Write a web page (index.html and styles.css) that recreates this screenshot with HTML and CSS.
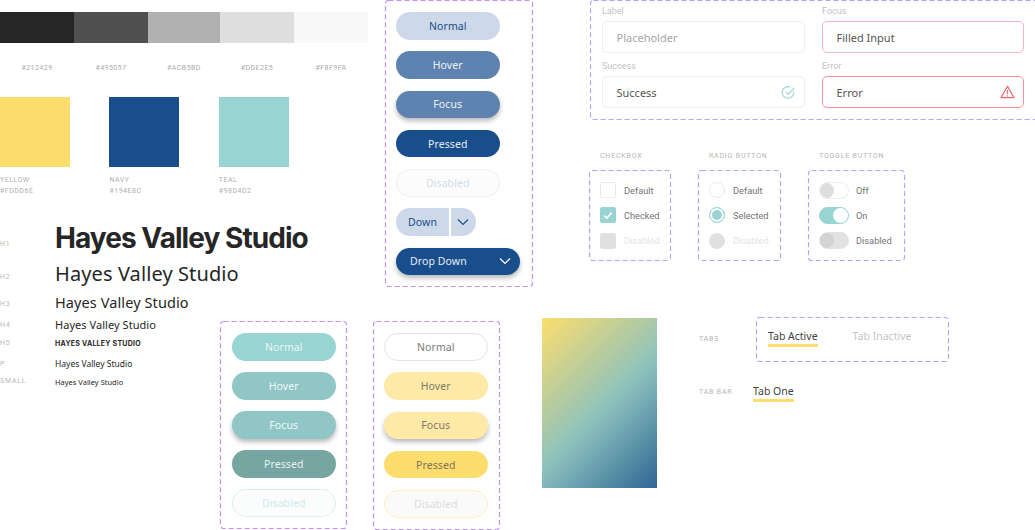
FILE: index.html
```html
<!DOCTYPE html>
<html>
<head>
	<meta charset="utf-8">
	<title>Hayes Valley Studio</title>
	<link rel="stylesheet" href="styles.css">
</head>
<body>
<div class="sheet">

	<!-- colours -->
	<div class="grays">
		<div class="gray"><div class="chip c1"></div><span>#212429</span></div>
		<div class="gray"><div class="chip c2"></div><span>#495057</span></div>
		<div class="gray g3"><div class="chip c3"></div><span>#ACB5BD</span></div>
		<div class="gray"><div class="chip c4"></div><span>#DDE2E5</span></div>
		<div class="gray"><div class="chip c5"></div><span>#F8F9FA</span></div>
	</div>
	<div class="swatches">
		<div class="swatch"><div class="square yellow"></div><p>YELLOW</p><p>#FDDD6E</p></div>
		<div class="swatch"><div class="square navy"></div><p>NAVY</p><p>#194E8C</p></div>
		<div class="swatch"><div class="square teal"></div><p>TEAL</p><p>#98D4D2</p></div>
	</div>

	<!-- type -->
	<div class="type">
		<div class="row r1"><span class="tag">H1</span><span class="h1">Hayes Valley Studio</span></div>
		<div class="row r2"><span class="tag">H2</span><span class="h2">Hayes Valley Studio</span></div>
		<div class="row r3"><span class="tag">H3</span><span class="h3">Hayes Valley Studio</span></div>
		<div class="row r4"><span class="tag">H4</span><span class="h4">Hayes Valley Studio</span></div>
		<div class="row r5"><span class="tag">H5</span><span class="h5">HAYES VALLEY STUDIO</span></div>
		<div class="row r6"><span class="tag">P</span><span class="para">Hayes Valley Studio</span></div>
		<div class="row r7"><span class="tag">SMALL</span><span class="small">Hayes Valley Studio</span></div>
	</div>

	<!-- navy buttons -->
	<div class="box box-navy">
		<svg class="dash"><rect></rect></svg>
		<div class="btn n-normal">Normal</div>
		<div class="btn n-hover">Hover</div>
		<div class="btn n-hover shadow">Focus</div>
		<div class="btn n-pressed">Pressed</div>
		<div class="btn n-disabled">Disabled</div>
		<div class="split">
			<div class="btn n-normal split-main">Down</div>
			<div class="btn n-normal split-arrow">
				<svg width="12" height="8" viewBox="0 0 12 8"><path d="M1 1.5 6 6.5 11 1.5" fill="none" stroke="#194e8c" stroke-width="1.2"/></svg>
			</div>
		</div>
		<div class="btn n-pressed shadow drop">
			<span>Drop Down</span>
			<svg width="12" height="8" viewBox="0 0 12 8"><path d="M1 1.5 6 6.5 11 1.5" fill="none" stroke="#fff" stroke-width="1.2"/></svg>
		</div>
	</div>

	<!-- teal buttons -->
	<div class="box box-teal">
		<svg class="dash"><rect></rect></svg>
		<div class="btn t-normal">Normal</div>
		<div class="btn t-hover">Hover</div>
		<div class="btn t-hover shadow">Focus</div>
		<div class="btn t-pressed">Pressed</div>
		<div class="btn t-disabled">Disabled</div>
	</div>

	<!-- yellow buttons -->
	<div class="box box-yellow">
		<svg class="dash"><rect></rect></svg>
		<div class="btn y-normal">Normal</div>
		<div class="btn y-hover">Hover</div>
		<div class="btn y-hover shadow">Focus</div>
		<div class="btn y-pressed">Pressed</div>
		<div class="btn y-disabled">Disabled</div>
	</div>

	<!-- inputs -->
	<div class="box box-inputs">
		<svg class="dash blue"><rect></rect></svg>
		<div class="field">
			<label>Label</label>
			<div class="input placeholder">Placeholder</div>
		</div>
		<div class="field">
			<label>Focus</label>
			<div class="input focus">Filled Input</div>
		</div>
		<div class="field">
			<label>Success</label>
			<div class="input">Success
				<svg width="15" height="15" viewBox="0 0 15 15"><path d="M12.6 6.2A5.8 5.8 0 1 1 9.4 2.2" fill="none" stroke="#98d4d2" stroke-width="1.1"/><path d="M4.8 6.8 7.3 9.2 13.4 2.6" fill="none" stroke="#98d4d2" stroke-width="1.1"/></svg>
			</div>
		</div>
		<div class="field">
			<label>Error</label>
			<div class="input error">Error
				<svg width="15" height="14" viewBox="0 0 15 14"><path d="M7.5 1.2 14 12.6H1Z" fill="none" stroke="#f0686e" stroke-width="1.2" stroke-linejoin="round"/><path d="M7.5 5V9M7.5 10.2V11.4" stroke="#f0686e" stroke-width="1.2"/></svg>
			</div>
		</div>
	</div>

	<!-- checkbox -->
	<div class="control c-check">
		<div class="cap">CHECKBOX</div>
		<div class="box">
			<svg class="dash blue"><rect></rect></svg>
			<div class="item"><i class="check"></i>Default</div>
			<div class="item"><i class="check on"><svg width="10" height="9" viewBox="0 0 10 9"><path d="M1.2 4.6 3.8 7 8.6 1.6" fill="none" stroke="#fff" stroke-width="1.7"/></svg></i>Checked</div>
			<div class="item off"><i class="check dis"></i>Disabled</div>
		</div>
	</div>

	<!-- radio -->
	<div class="control c-radio">
		<div class="cap">RADIO BUTTON</div>
		<div class="box">
			<svg class="dash blue"><rect></rect></svg>
			<div class="item"><i class="radio"></i>Default</div>
			<div class="item"><i class="radio on"></i>Selected</div>
			<div class="item off"><i class="radio dis"></i>Disabled</div>
		</div>
	</div>

	<!-- toggle -->
	<div class="control c-toggle">
		<div class="cap">TOGGLE BUTTON</div>
		<div class="box">
			<svg class="dash blue"><rect></rect></svg>
			<div class="item"><i class="toggle"></i>Off</div>
			<div class="item"><i class="toggle on"></i>On</div>
			<div class="item"><i class="toggle dis"></i>Disabled</div>
		</div>
	</div>

	<div class="gradient"></div>

	<!-- tabs -->
	<div class="cap tabs-cap">TABS</div>
	<div class="box box-tabs">
		<svg class="dash blue"><rect></rect></svg>
		<span class="tab active">Tab Active</span>
		<span class="tab">Tab Inactive</span>
	</div>
	<div class="cap bar-cap">TAB BAR</div>
	<div class="tabbar"><span class="tab active">Tab One</span></div>

</div>
</body>
</html>
```

FILE: styles.css
```css
html, body {
	margin: 0;
	padding: 0;
	background: #fff;
}
.sheet {
	position: relative;
	width: 1035px;
	height: 530px;
	overflow: hidden;
	font-family: "Noto Sans", sans-serif;
}

/* gray strip */
.grays {
	position: absolute;
	left: 0;
	top: 12px;
	width: 368px;
	display: flex;
}
.gray {
	width: 74px;
	text-align: center;
	font: 7px "Roboto", sans-serif;
	letter-spacing: .45px;
	color: #ababab;
}
.gray.g3 { width: 72px; }
.chip {
	height: 31px;
	margin-bottom: 21px;
}
.c1 { background: #262626; }
.c2 { background: #505050; }
.c3 { background: #b1b1b1; }
.c4 { background: #dfdfdf; }
.c5 { background: #f8f8f8; }

/* swatches */
.swatches {
	position: absolute;
	left: 0;
	top: 97px;
	display: flex;
	gap: 39.4px;
}
.swatch {
	width: 70px;
	font: 7px "Roboto", sans-serif;
	letter-spacing: .5px;
	color: #b0b0b0;
}
.swatch p {
	margin: 0;
	line-height: 11px;
}
.square {
	height: 70px;
	margin-bottom: 8px;
}
.yellow { background: #fddd6e; }
.navy { background: #194e8c; }
.teal { background: #98d4d2; }

/* type scale */
.type {
	position: absolute;
	left: 0;
	top: 220px;
	width: 320px;
}
.row {
	display: flex;
	align-items: center;
	color: #262626;
}
.r1 { height: 35px; }
.r2 { height: 32px; margin-top: 2px; }
.r3 { height: 25px; }
.r4 { height: 21px; }
.r5 { height: 16px; }
.r6 { height: 21px; margin-top: 2px; }
.r7 { height: 15px; }
.tag {
	width: 55px;
	flex: none;
	font: 7px "Roboto", sans-serif;
	letter-spacing: .8px;
	color: #b8b8b8;
}
.r1 .tag { margin-top: 13px; }
.r2 .tag { margin-top: 8px; }
.r3 .tag { margin-top: 5px; }
.r7 .tag { margin-top: -2px; }
.h1 {
	font: 700 28px "Inter", sans-serif;
	letter-spacing: -.95px;
	white-space: nowrap;
}
.h2 { font-size: 20px; letter-spacing: .1px; }
.h3 { font-size: 14.5px; letter-spacing: .1px; }
.h4 { font-size: 11px; letter-spacing: .05px; }
.h5 {
	font: 700 7px "Inter", sans-serif;
	letter-spacing: .25px;
}
.para { font-size: 8.5px; }
.small { font-size: 7.5px; }

/* dashed frames */
.box {
	position: absolute;
	box-sizing: border-box;
}
.dash {
	position: absolute;
	left: 0;
	top: 0;
	width: 100%;
	height: 100%;
	overflow: visible;
	pointer-events: none;
}
.dash rect {
	x: .5px;
	y: .5px;
	rx: 3px;
	width: calc(100% - 1px);
	height: calc(100% - 1px);
	fill: none;
	stroke: #bd94fb;
	stroke-width: 1.2px;
	stroke-dasharray: 5 3;
}
.dash.blue rect { stroke: #b3a3fa; }

/* buttons */
.box-navy, .box-teal, .box-yellow {
	display: flex;
	flex-direction: column;
	gap: 11.75px;
}
.box-navy {
	left: 385px;
	top: 0;
	width: 148px;
	height: 287px;
	padding: 12px 11px;
}
.box-teal {
	left: 220px;
	top: 321px;
	width: 127px;
	height: 208px;
	padding: 12px 12px;
	gap: 11.6px;
}
.box-yellow {
	left: 373px;
	top: 321px;
	width: 127px;
	height: 209px;
	padding: 12px 11px;
}
.btn {
	box-sizing: border-box;
	width: 103.5px;
	height: 27.5px;
	flex: none;
	border-radius: 14px;
	display: flex;
	align-items: center;
	justify-content: center;
	font-size: 10.5px;
	letter-spacing: .1px;
}
.shadow { box-shadow: 0 3px 5px rgba(0, 0, 0, .28); }
.n-normal { background: #cdd9e8; color: #194e8c; }
.n-hover { background: #5f83b0; color: #eef2f7; }
.n-pressed { background: #194e8c; color: #e6edf5; }
.n-disabled { background: #fcfcfd; border: 1px solid #eceff3; color: #d2dce9; }
.t-normal { background: #98d4d2; color: #eaf7f6; }
.t-hover { background: #90c6c5; color: #eef8f7; }
.t-pressed { background: #76a5a2; color: #e8f1f0; }
.t-disabled { background: #fbfdfd; border: 1px solid #d9f0ef; color: #cbeae9; }
.y-normal { background: #fff; border: 1px solid #e4e4df; color: #7b7b78; }
.y-hover { background: #feeaa6; color: #7d7a6a; }
.y-pressed { background: #fddd6e; color: #7b7457; }
.y-disabled { background: #fafafa; border: 1px solid #feefc9; color: #dcdcdc; }

.split {
	display: flex;
	gap: 1.5px;
}
.split-main {
	width: 53px;
	border-radius: 14px 0 0 14px;
}
.split-arrow {
	width: 25px;
	border-radius: 0 14px 14px 0;
}
.drop {
	width: 124px;
	justify-content: space-between;
	padding: 0 9px 0 14px;
}

/* inputs */
.box-inputs {
	left: 590px;
	top: 0;
	width: 460px;
	height: 120px;
	padding: 5px 26px 0 12px;
	display: grid;
	grid-template-columns: 203px 202px;
	column-gap: 17px;
	row-gap: 7px;
	align-content: start;
}
.field label {
	display: block;
	font: 9px/13px "Roboto", sans-serif;
	color: #c2c2c2;
	margin-bottom: 3px;
}
.input {
	box-sizing: border-box;
	height: 32px;
	border: 1px solid #eeeeee;
	border-radius: 5px;
	padding: 0 8px 0 13.5px;
	display: flex;
	align-items: center;
	justify-content: space-between;
	font-size: 11px;
	color: #555;
}
.placeholder { color: #a6a6a6; }
.focus { border-color: #f7b3c8; }
.error { border-color: #fb9298; }

/* checkbox, radio, toggle */
.control {
	position: absolute;
	top: 152px;
	height: 109px;
}
.c-check { left: 589px; width: 82px; }
.c-radio { left: 698px; width: 83px; }
.c-toggle { left: 808px; width: 97px; }
.control .box {
	left: 0;
	top: 18px;
	width: 100%;
	height: 91px;
	padding: 12px 0 0 11px;
	display: flex;
	flex-direction: column;
	gap: 9.25px;
}
.cap {
	font: 7px "Roboto", sans-serif;
	letter-spacing: .8px;
	color: #b4b4b4;
	line-height: 9px;
	padding-left: 11px;
}
.item {
	display: flex;
	align-items: center;
	gap: 8px;
	height: 16px;
	font: 9.25px "Roboto", sans-serif;
	color: #747474;
	white-space: nowrap;
}
.item.off { color: #e4e4e4; }
.check, .radio {
	box-sizing: border-box;
	display: flex;
	align-items: center;
	justify-content: center;
	width: 16px;
	height: 16px;
	flex: none;
	border: 1px solid #e9e9e9;
	border-radius: 2px;
}
.check.on { background: #98d4d2; border-color: #98d4d2; }
.check.dis { background: #e0e0e0; border-color: #e0e0e0; }
.radio { border-radius: 50%; }
.radio.on {
	border: 1.5px solid #98d4d2;
	background: #98d4d2;
	box-shadow: inset 0 0 0 2px #fff;
}
.radio.dis { background: #e0e0e0; border-color: #e0e0e0; }
.toggle {
	box-sizing: border-box;
	position: relative;
	display: block;
	width: 30px;
	height: 17px;
	flex: none;
	margin-right: -1px;
	border: 1px solid #ececec;
	border-radius: 9px;
}
.toggle::after {
	content: "";
	position: absolute;
	left: 0;
	top: 0;
	width: 14px;
	height: 15px;
	border-radius: 50%;
	background: #dedede;
}
.toggle.on { background: #98d4d2; border-color: #98d4d2; }
.toggle.on::after { left: auto; right: 0; width: 15px; background: #fff; }
.toggle.dis { background: #e2e2e2; border-color: #e2e2e2; }
.toggle.dis::after { background: #d3d3d3; }

/* gradient */
.gradient {
	position: absolute;
	left: 542px;
	top: 318px;
	width: 115px;
	height: 170px;
	background: linear-gradient(135deg, #fddd6e 0%, #8cc2bd 54%, #2f6595 100%);
}

/* tabs */
.tabs-cap, .bar-cap {
	position: absolute;
	left: 699px;
	padding-left: 0;
}
.tabs-cap { top: 335px; }
.bar-cap { top: 388px; }
.box-tabs {
	left: 756px;
	top: 317px;
	width: 193px;
	height: 45px;
	padding: 11px 0 0 12px;
	display: flex;
	gap: 35px;
	align-items: flex-start;
}
.tabbar {
	position: absolute;
	left: 753px;
	top: 384px;
	display: flex;
}
.tab {
	font-size: 10.5px;
	line-height: 16px;
	color: #c6c6c6;
	white-space: nowrap;
}
.tabbar .tab { line-height: 15px; }
.tab.active {
	color: #3f3f3f;
	border-bottom: 3px solid #fddd6e;
}
```
